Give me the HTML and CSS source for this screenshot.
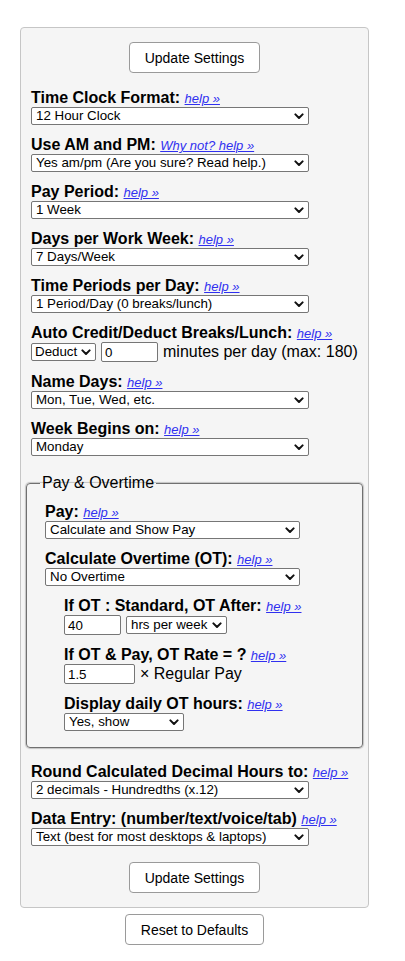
FILE: index.html
```html
<!DOCTYPE html>
<html lang="en">
<head>
<meta charset="utf-8">
<title>Settings</title>
<link rel="stylesheet" href="styles.css">
</head>
<body>
<div class="page">
  <form class="panel">
    <div class="btn-row top"><button type="button" class="btn">Update Settings</button></div>

    <div class="field">
      <div class="label"><b>Time Clock Format:</b> <a class="help" href="#">help »</a></div>
      <select class="sel"><option>12 Hour Clock</option></select>
    </div>
    <div class="field">
      <div class="label"><b>Use AM and PM:</b> <a class="help" href="#">Why not? help »</a></div>
      <select class="sel"><option>Yes am/pm (Are you sure? Read help.)</option></select>
    </div>
    <div class="field">
      <div class="label"><b>Pay Period:</b> <a class="help" href="#">help »</a></div>
      <select class="sel"><option>1 Week</option></select>
    </div>
    <div class="field">
      <div class="label"><b>Days per Work Week:</b> <a class="help" href="#">help »</a></div>
      <select class="sel"><option>7 Days/Week</option></select>
    </div>
    <div class="field">
      <div class="label"><b>Time Periods per Day:</b> <a class="help" href="#">help »</a></div>
      <select class="sel"><option>1 Period/Day (0 breaks/lunch)</option></select>
    </div>
    <div class="field">
      <div class="label"><b>Auto Credit/Deduct Breaks/Lunch:</b> <a class="help" href="#">help »</a></div>
      <div class="inline">
        <select class="sel sel-deduct"><option>Deduct</option></select>
        <input class="txt txt-min" type="text" value="0">
        <span class="plain">minutes per day (max: 180)</span>
      </div>
    </div>
    <div class="field">
      <div class="label"><b>Name Days:</b> <a class="help" href="#">help »</a></div>
      <select class="sel"><option>Mon, Tue, Wed, etc.</option></select>
    </div>
    <div class="field">
      <div class="label"><b>Week Begins on:</b> <a class="help" href="#">help »</a></div>
      <select class="sel"><option>Monday</option></select>
    </div>

    <fieldset class="group">
      <legend>Pay &amp; Overtime</legend>
      <div class="group-inner">
        <div class="field">
          <div class="label"><b>Pay:</b> <a class="help" href="#">help »</a></div>
          <select class="sel sel-fs"><option>Calculate and Show Pay</option></select>
        </div>
        <div class="field">
          <div class="label"><b>Calculate Overtime (OT):</b> <a class="help" href="#">help »</a></div>
          <select class="sel sel-fs"><option>No Overtime</option></select>
        </div>
        <div class="sub">
          <div class="field">
            <div class="label"><b>If OT : Standard, OT After:</b> <a class="help" href="#">help »</a></div>
            <div class="inline">
              <input class="txt txt-hrs" type="text" value="40">
              <select class="sel sel-per"><option>hrs per week</option></select>
            </div>
          </div>
          <div class="field">
            <div class="label"><b>If OT &amp; Pay, OT Rate = ?</b> <a class="help" href="#">help »</a></div>
            <div class="inline">
              <input class="txt txt-rate" type="text" value="1.5">
              <span class="plain">× Regular Pay</span>
            </div>
          </div>
          <div class="field">
            <div class="label"><b>Display daily OT hours:</b> <a class="help" href="#">help »</a></div>
            <select class="sel sel-show"><option>Yes, show</option></select>
          </div>
        </div>
      </div>
    </fieldset>

    <div class="field">
      <div class="label"><b>Round Calculated Decimal Hours to:</b> <a class="help" href="#">help »</a></div>
      <select class="sel"><option>2 decimals - Hundredths (x.12)</option></select>
    </div>
    <div class="field">
      <div class="label"><b>Data Entry: (number/text/voice/tab)</b> <a class="help" href="#">help »</a></div>
      <select class="sel"><option>Text (best for most desktops &amp; laptops)</option></select>
    </div>

    <div class="btn-row bottom"><button type="button" class="btn">Update Settings</button></div>
  </form>
  <div class="btn-row reset"><button type="button" class="btn">Reset to Defaults</button></div>
</div>
</body>
</html>
```

FILE: styles.css
```css
html, body {
  margin: 0;
  padding: 0;
  background: #ffffff;
}
body {
  font-family: "Liberation Sans", Arial, sans-serif;
  font-size: 16px;
  color: #000;
}
.page {
  padding: 27px 0 0 20px;
  width: 349px;
}
.panel {
  box-sizing: border-box;
  width: 349px;
  margin: 0;
  background: #f5f5f5;
  border: 1px solid #c6c6c6;
  border-radius: 4px;
  padding: 14px 10px 14px 10px;
}
.btn-row {
  display: flex;
  justify-content: center;
}
.btn-row.top {
  margin-bottom: 15px;
}
.btn-row.bottom {
  margin-top: 16px;
}
.btn-row.reset {
  margin-top: 6px;
}
.btn {
  box-sizing: border-box;
  height: 31px;
  padding: 0 15px;
  background: #fff;
  border: 1px solid #9a9a9a;
  border-radius: 4px;
  font-family: "Liberation Sans", Arial, sans-serif;
  font-size: 14px;
  color: #000;
}
.field {
  margin-bottom: 10px;
}
.label {
  line-height: 19px;
  height: 19px;
  white-space: nowrap;
}
.label b {
  font-weight: bold;
  font-size: 16px;
}
.help {
  font-size: 13px;
  font-style: italic;
  color: #3030f0;
  text-decoration: underline;
}
.sel {
  -webkit-appearance: none;
  appearance: none;
  box-sizing: border-box;
  display: block;
  width: 278px;
  height: 18px;
  margin: 0;
  padding: 0 14px 0 4px;
  font-family: "Liberation Sans", Arial, sans-serif;
  font-size: 13.33px;
  line-height: 16px;
  color: #000;
  background-color: #fff;
  background-image: url("data:image/svg+xml,%3Csvg xmlns='http://www.w3.org/2000/svg' width='10' height='7' viewBox='0 0 10 7'%3E%3Cpath d='M1.4 1.4 L5 5 L8.6 1.4' fill='none' stroke='%23111' stroke-width='2' stroke-linecap='round' stroke-linejoin='round'/%3E%3C/svg%3E");
  background-repeat: no-repeat;
  background-position: right 4px center;
  background-size: 10px 7px;
  border: 1px solid #767676;
  border-radius: 2px;
}
.inline {
  display: flex;
  align-items: center;
  gap: 5px;
}
.inline .sel {
  display: inline-block;
}
.sel-deduct { width: 65px; padding-left: 3px; }
.sel-fs { width: 255px; }
.sel-per { width: 101px; }
.sel-show { width: 120px; }
.txt {
  box-sizing: border-box;
  height: 20px;
  margin: 0;
  padding: 0 3px;
  font-family: "Liberation Sans", Arial, sans-serif;
  font-size: 13.33px;
  color: #000;
  background: #fff;
  border: 1px solid #767676;
  border-radius: 2px;
}
.txt-min { width: 57px; }
.txt-hrs { width: 57px; }
.txt-rate { width: 71px; }
.plain {
  font-size: 16px;
  line-height: 20px;
}
.group {
  margin: 18px -5px 14px -5px;
  padding: 10px 13px 6px 13px;
  border: 1px solid #707070;
  border-radius: 4px;
  box-shadow: 0 0 1px 1px #c4c4c4;
  min-width: 0;
}
.group legend {
  padding: 0 2px;
  font-size: 16px;
  line-height: 18px;
}
.group-inner {
  padding-left: 5px;
}
.sub {
  padding-left: 19px;
}
```
